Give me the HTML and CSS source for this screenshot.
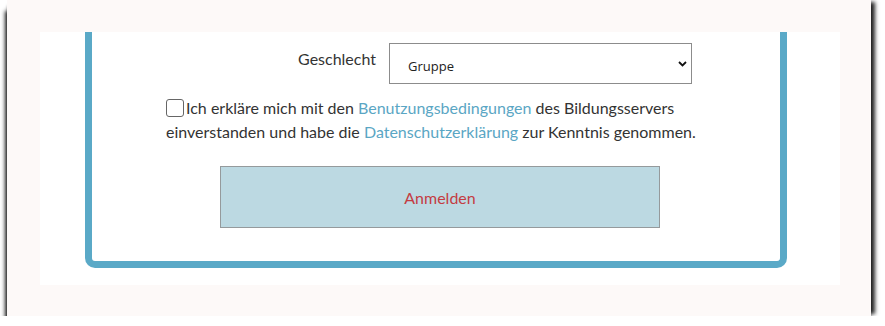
FILE: index.html
```html
<!DOCTYPE HTML>
<html>
<head>
  <title>Anmeldung</title>
  <link rel="stylesheet" href="styles.css">
</head>
<body>
  <div class="sheet">
    <div class="panel">
      <div class="card">
        <div class="form-row">
          <label class="form-label" for="gender">Geschlecht</label>
          <span class="select-wrap">
            <select id="gender" class="form-select">
              <option>Gruppe</option>
            </select>
            <svg class="select-arrow" width="9" height="6" viewBox="0 0 9 6">
              <path d="M1 1 L4.5 4.5 L8 1" fill="none" stroke="#111" stroke-width="1.8"/>
            </svg>
          </span>
        </div>

        <label class="terms">
          <input type="checkbox" class="terms-check" />Ich erkläre mich mit den <a href="#">Benutzungsbedingungen</a> des Bildungsservers<br />
          einverstanden und habe die <a href="#">Datenschutzerklärung</a> zur Kenntnis genommen.
        </label>

        <button class="submit" type="button">Anmelden</button>
      </div>
    </div>
  </div>
</body>
</html>
```

FILE: styles.css
```css
body {
  margin: 0;
  background: #fff;
  font-family: Lato, "Open Sans", sans-serif;
  color: #333;
}

/* paper sheet with curled shadow */
.sheet {
  width: 864px;
  height: 316px;
  margin: 0 0 0 7px;
  background: #fdf9f8;
  box-shadow: 0 5px 3px -1px rgba(0, 0, 0, .8),
              6px 0 4px -2px rgba(0, 0, 0, .85),
              -5px 8px 4px -3px rgba(0, 0, 0, .85);
  overflow: hidden;
  padding-top: 32px;
  box-sizing: border-box;
}
.panel {
  width: 800px;
  height: 253px;
  margin-left: 33px;
  background: #fff;
  padding: 0 53px 17px 45px;
  box-sizing: border-box;
}

.card {
  height: 100%;
  box-sizing: border-box;
  border: 7px solid #5aa9c7;
  border-top: none;
  border-radius: 0 0 10px 10px;
  padding-top: 11px;
}

.form-row {
  display: grid;
  grid-template-columns: 284px 303px;
  column-gap: 13px;
  align-items: start;
}
.form-label {
  text-align: right;
  font-size: 16px;
  line-height: 20px;
  padding-top: 6px;
}
.select-wrap {
  position: relative;
  display: block;
}
.form-select {
  -webkit-appearance: none;
  appearance: none;
  display: block;
  width: 303px;
  height: 41px;
  border: 1px solid #8c8c8c;
  border-radius: 0;
  background: #fff;
  padding: 5px 0 0 18px;
  font-family: "Open Sans", sans-serif;
  font-size: 13px;
  color: #222;
  outline: none;
}
.select-arrow {
  position: absolute;
  right: 5px;
  top: 18px;
}

.terms {
  display: block;
  width: 540px;
  margin: 12px auto 0 auto;
  font-size: 16px;
  line-height: 24px;
}
.terms a {
  color: #5aa6c4;
  text-decoration: none;
}
.terms-check {
  -webkit-appearance: none;
  appearance: none;
  width: 18px;
  height: 18px;
  margin: 0 2px 0 0;
  border: 1px solid #666;
  border-radius: 3px;
  background: #fff;
  vertical-align: -3px;
}

.submit {
  display: block;
  width: 440px;
  height: 62px;
  margin: 22px 0 0 128px;
  background: #bcd9e2;
  border: 1px solid #959a9c;
  font-family: Lato, "Open Sans", sans-serif;
  font-size: 16px;
  color: #c43c42;
}
```
